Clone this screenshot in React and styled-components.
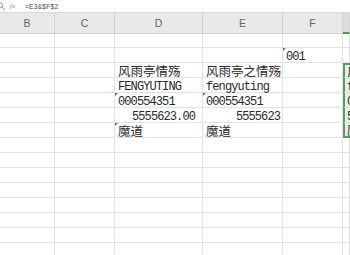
import React from "react";
import styled, { createGlobalStyle, css } from "styled-components";

const GlobalStyle = createGlobalStyle`
  html, body {
    margin: 0;
    padding: 0;
    background: #ffffff;
    overflow: hidden;
  }
  body {
    width: 350px;
    height: 255px;
  }
`;

const Page = styled.div`
  width: 350px;
  height: 255px;
  overflow: hidden;
  display: flex;
  flex-direction: column;
  font-family: "Liberation Sans", Arial, sans-serif;
`;

const FormulaBar = styled.div`
  height: 13px;
  flex: none;
  display: flex;
  align-items: center;
  background: #ffffff;
  border-bottom: 1px solid #d9d9d9;
  box-sizing: border-box;
`;

const BarIcons = styled.div`
  width: 28px;
  height: 100%;
  display: flex;
  align-items: center;
  gap: 5px;
  margin-left: -3px;
  color: #8a8a8a;
`;

const Fx = styled.span`
  font-family: "Liberation Serif", serif;
  font-style: italic;
  font-size: 7px;
  color: #8a8a8a;
`;

const FormulaText = styled.span`
  font-size: 6.5px;
  color: #444;
  letter-spacing: 0.3px;
`;

const Grid = styled.div`
  display: grid;
  grid-template-columns: 55px 60px 88px 80px 60px 1fr;
  grid-auto-rows: 15px;
  grid-template-rows: 21px 14px;
`;

const HeaderCell = styled.div`
  display: flex;
  align-items: center;
  justify-content: center;
  background: ${(p) => (p.$active ? "#dcdcdc" : "#e9e9e9")};
  border-right: 1px solid #d4d4d4;
  border-bottom: 1px solid #cfcfcf;
  box-sizing: border-box;
  font-size: 10.5px;
  color: #666;
  ${(p) =>
    p.$active &&
    css`
      border-bottom: 2px solid #4f944f;
    `}
`;

const Cell = styled.div`
  position: relative;
  display: flex;
  align-items: center;
  justify-content: ${(p) => (p.$right ? "flex-end" : "flex-start")};
  padding: 0 ${(p) => p.$pr ?? 2}px 0 3px;
  border-right: 1px solid #e3e3e3;
  border-bottom: 1px solid #e3e3e3;
  box-sizing: border-box;
  white-space: nowrap;
  overflow: visible;
  color: #2a2a2a;
  font-size: 12.5px;
  font-family: "Noto Sans CJK SC", "Noto Sans", sans-serif;
  ${(p) =>
    p.$mono &&
    css`
      font-family: "Liberation Mono", "Courier New", monospace;
      font-size: 12px;
      letter-spacing: -0.9px;
      padding-top: 3px;
    `}
  ${(p) =>
    p.$flag &&
    css`
      &::before {
        content: "";
        position: absolute;
        top: 0;
        left: 0;
        border-top: 3px solid #3f8f3f;
        border-right: 3px solid transparent;
      }
    `}
  ${(p) =>
    p.$sel &&
    css`
      background: #e8efe8;
      padding-left: 2px;
      border-left: 2px solid #5a9a5a;
      border-right: none;
      overflow: hidden;
      border-bottom: 1px solid #d6e2d6;
    `}
  ${(p) =>
    p.$selTop &&
    css`
      border-top: 2px solid #5a9a5a;
    `}
  ${(p) =>
    p.$selBottom &&
    css`
      border-bottom: 2px solid #5a9a5a;
    `}
`;

const headers = ["B", "C", "D", "E", "F", ""];

const rows = [
  {},
  { F: { text: "001", mono: true, flag: true } },
  {
    D: { text: "风雨亭情殇" },
    E: { text: "风雨亭之情殇" },
    G: { text: "风", sel: true, selTop: true },
  },
  {
    D: { text: "FENGYUTING", mono: true },
    E: { text: "fengyuting", mono: true },
    G: { text: "f", mono: true, sel: true },
  },
  {
    D: { text: "000554351", mono: true, flag: true },
    E: { text: "000554351", mono: true, flag: true },
    G: { text: "0", mono: true, sel: true },
  },
  {
    D: { text: "5555623.00", mono: true, right: true, pr: 7 },
    E: { text: "5555623", mono: true, right: true, pr: 2 },
    G: { text: "5", mono: true, sel: true },
  },
  {
    D: { text: "魔道", flag: true },
    E: { text: "魔道" },
    G: { text: "魔", sel: true, selBottom: true },
  },
];

while (rows.length < 16) rows.push({});

const keys = ["B", "C", "D", "E", "F", "G"];

function SearchIcon() {
  return (
    <svg width="8" height="8" viewBox="0 0 8 8" fill="none">
      <circle cx="3.2" cy="3.2" r="2.3" stroke="#8a8a8a" strokeWidth="0.9" />
      <line x1="5" y1="5" x2="7.3" y2="7.3" stroke="#8a8a8a" strokeWidth="0.9" />
    </svg>
  );
}

export default function App() {
  return (
    <Page>
      <GlobalStyle />
      <FormulaBar>
        <BarIcons>
          <SearchIcon />
          <Fx>fx</Fx>
        </BarIcons>
        <FormulaText>=E3&amp;$F$2</FormulaText>
      </FormulaBar>
      <Grid>
        {headers.map((h, i) => (
          <HeaderCell key={"h" + i} $active={i === 5}>
            {h}
          </HeaderCell>
        ))}
        {rows.map((row, r) =>
          keys.map((k) => {
            const c = row[k] || {};
            return (
              <Cell
                key={r + k}
                $mono={c.mono}
                $flag={c.flag}
                $right={c.right}
                $pr={c.pr}
                $sel={c.sel}
                $selTop={c.selTop}
                $selBottom={c.selBottom}
              >
                {c.text}
              </Cell>
            );
          })
        )}
      </Grid>
    </Page>
  );
}
